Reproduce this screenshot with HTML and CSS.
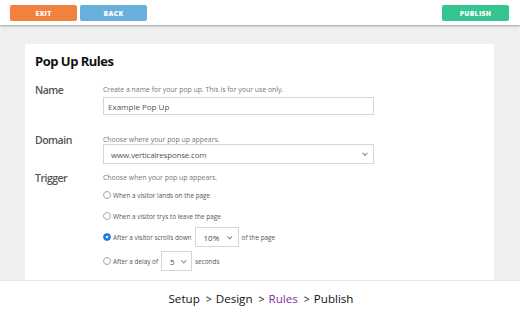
FILE: index.html
```html
<!DOCTYPE html>
<html>
<head>
<meta charset="utf-8">
<link rel="stylesheet" href="styles.css">
</head>
<body>
<div class="page">
  <header class="topbar">
    <div class="btns">
      <button class="btn exit">EXIT</button>
      <button class="btn back">BACK</button>
    </div>
    <button class="btn publish">PUBLISH</button>
  </header>
  <main class="main">
    <section class="card">
      <h1 class="title">Pop Up Rules</h1>
      <div class="row row-name">
        <div class="label">Name</div>
        <div class="field">
          <div class="help">Create a name for your pop up. This is for your use only.</div>
          <div class="input">Example Pop Up</div>
        </div>
      </div>
      <div class="row row-domain">
        <div class="label">Domain</div>
        <div class="field">
          <div class="help">Choose where your pop up appears.</div>
          <div class="input select">www.verticalresponse.com<span class="chev"></span></div>
        </div>
      </div>
      <div class="row row-trigger">
        <div class="label">Trigger</div>
        <div class="field">
          <div class="help">Choose when your pop up appears.</div>
          <div class="radios">
            <div class="radio-row r1"><span class="radio"></span>When a visitor lands on the page</div>
            <div class="radio-row r2"><span class="radio"></span>When a visitor trys to leave the page</div>
            <div class="radio-row r3"><span class="radio on"></span>After a visitor scrolls down <span class="mini m10">10%<span class="chev"></span></span> of the page</div>
            <div class="radio-row r4"><span class="radio"></span>After a delay of <span class="mini m5">5<span class="chev"></span></span> seconds</div>
          </div>
        </div>
      </div>
    </section>
  </main>
  <footer class="footer">
    <span class="step">Setup</span><span class="sep">&gt;</span><span class="step">Design</span><span class="sep">&gt;</span><span class="step active">Rules</span><span class="sep">&gt;</span><span class="step">Publish</span>
  </footer>
</div>
</body>
</html>
```
FILE: styles.css
```css
* { box-sizing: border-box; }
html, body { margin: 0; padding: 0; }
body {
  width: 520px;
  height: 316px;
  overflow: hidden;
  font-family: "Open Sans", "Liberation Sans", sans-serif;
  background: #efefef;
}
.page {
  display: flex;
  flex-direction: column;
  height: 316px;
}
.topbar {
  height: 25px;
  flex: none;
  background: #fff;
  display: flex;
  justify-content: space-between;
  align-items: flex-start;
  padding: 5px 11px 0 10px;
  box-shadow: 0 1px 2px rgba(0,0,0,0.35);
  position: relative;
  z-index: 2;
}
.btns { display: flex; gap: 3px; }
.btn {
  width: 67px;
  height: 16px;
  border: none;
  border-radius: 2px;
  color: #fff;
  font-family: "Open Sans", sans-serif;
  font-weight: 800;
  font-size: 6.8px;
  letter-spacing: 0.3px;
  padding: 0;
  display: flex;
  align-items: center;
  justify-content: center;
}
.exit { background: #f3803f; }
.back { background: #69afdb; }
.publish { background: #35c68f; }
.main {
  flex: 1;
  overflow: hidden;
  padding: 19px 26px 0 25px;
}
.card {
  background: #fff;
  height: 300px;
  padding: 8px 10px 0 10px;
}
.title {
  margin: 0;
  font-size: 13px;
  font-weight: 700;
  color: #111;
  line-height: 18px;
  letter-spacing: -0.5px;
}
.row {
  display: grid;
  grid-template-columns: 68px 271px;
}
.row-name { margin-top: 12px; }
.row-domain { margin-top: 17px; }
.row-trigger { margin-top: 6px; }
.label {
  font-size: 10.5px;
  font-weight: 600;
  color: #555;
  line-height: 16px;
  letter-spacing: -0.5px;
}
.help {
  font-size: 6.9px;
  color: #777;
  line-height: 10px;
  margin-top: 3px;
}
.input {
  margin-top: 2px;
  height: 18px;
  border: 1px solid #d6d6d6;
  font-size: 8px;
  color: #555;
  padding: 0 4px;
  display: flex;
  align-items: center;
  position: relative;
}
.select { height: 20px; margin-top: -1px; padding-left: 7px; letter-spacing: -0.2px; }
.chev {
  position: absolute;
  right: 6px;
  top: 50%;
  width: 4px;
  height: 4px;
  border-right: 1px solid #888;
  border-bottom: 1px solid #888;
  transform: translateY(-70%) rotate(45deg);
}
.radios { display: flex; flex-direction: column; }
.radio-row {
  display: flex;
  align-items: center;
  font-size: 6.4px;
  color: #555;
  white-space: nowrap;
}
.r1 { height: 10px; margin-top: 7px; }
.r2 { height: 10px; margin-top: 11px; }
.r3 { height: 20px; margin-top: 6px; }
.r4 { height: 20px; margin-top: 4px; }
.radio {
  width: 8px;
  height: 8px;
  border-radius: 50%;
  border: 1px solid #aaa;
  margin-right: 2px;
  flex: none;
  background: #fff;
}
.radio.on {
  border-color: #1f7be6;
  background: radial-gradient(circle, #fff 0 1.3px, #1f7be6 1.6px);
}
.mini {
  position: relative;
  display: inline-flex;
  align-items: center;
  height: 20px;
  border: 1px solid #d6d6d6;
  font-size: 8px;
  color: #444;
  margin: 0 3px 0 3px;
}
.m10 { width: 44px; padding-left: 8px; }
.m5 { width: 31px; padding-left: 8px; }
.mini .chev { width: 3.5px; height: 3.5px; right: 6px; }
.footer {
  height: 36px;
  flex: none;
  background: #fff;
  border-top: 1px solid #e6e6e6;
  display: flex;
  justify-content: center;
  align-items: center;
  padding-left: 2px;
  font-size: 11.6px;
  color: #111;
  position: relative;
  z-index: 2;
}
.sep { margin: 0 4px 0 6px; font-size: 10.5px; }
.active { color: #7b2ea3; }
```
